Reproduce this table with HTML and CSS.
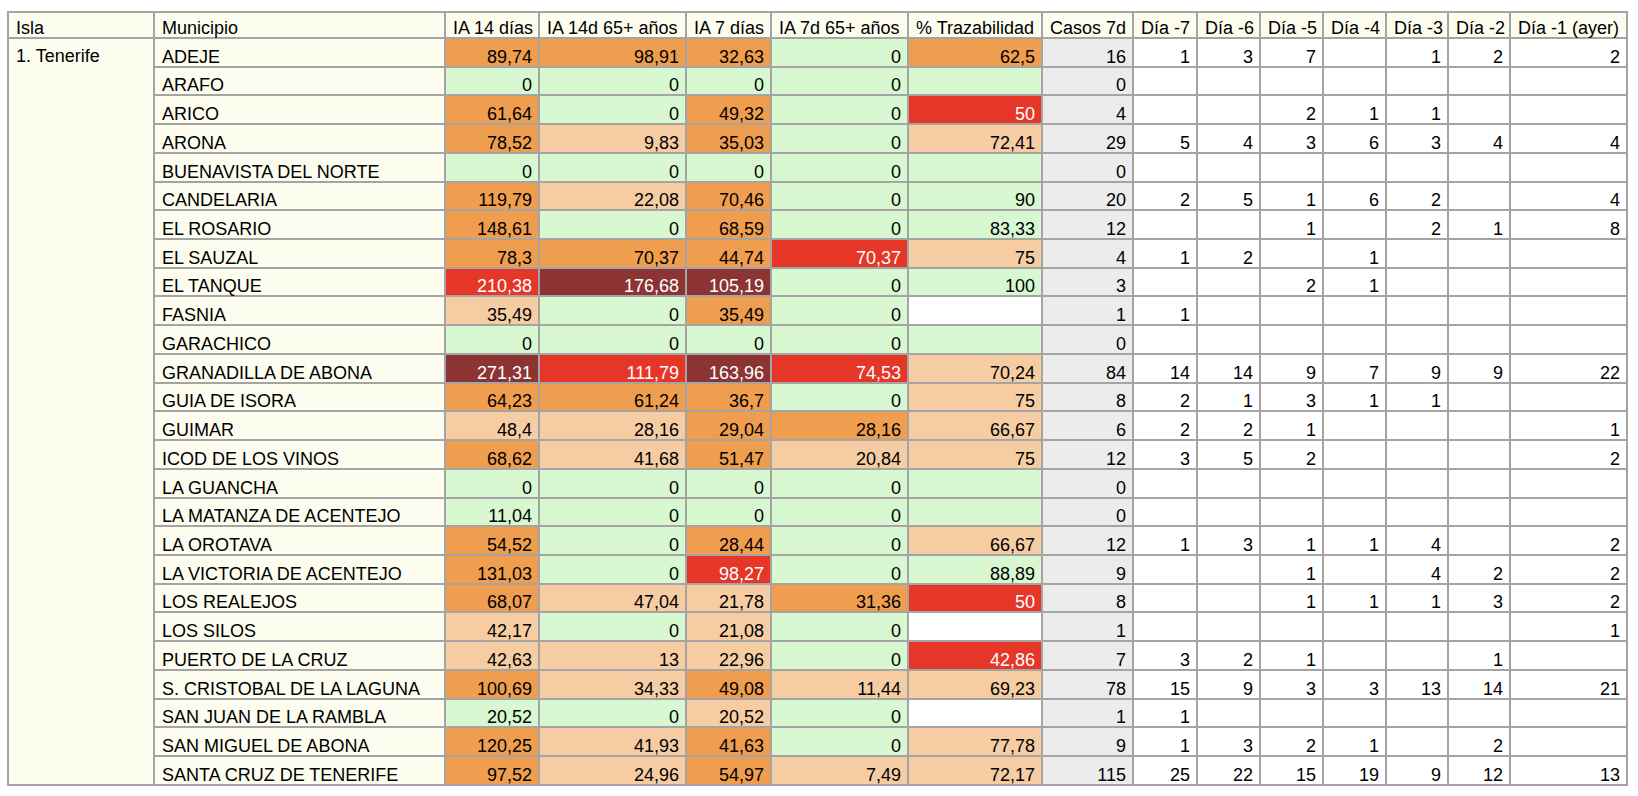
FILE: index.html
```html
<!DOCTYPE html>
<html lang="es">
<head>
<meta charset="utf-8">
<title>Incidencia COVID-19 Tenerife</title>
<link rel="stylesheet" href="styles.css">
</head>
<body>
<div class="wrap">
<table class="grid">
<colgroup>
<col class="w-isla"><col class="w-mun"><col class="w-ia14"><col class="w-ia14v"><col class="w-ia7"><col class="w-ia7v"><col class="w-traz"><col class="w-casos">
<col class="w-d7"><col class="w-d6"><col class="w-d5"><col class="w-d4"><col class="w-d3"><col class="w-d2"><col class="w-d1">
</colgroup>
<thead>
<tr class="head">
<th>Isla</th><th>Municipio</th><th>IA 14 días</th><th>IA 14d 65+ años</th><th>IA 7 días</th><th>IA 7d 65+ años</th><th>% Trazabilidad</th><th>Casos 7d</th><th>Día -7</th><th>Día -6</th><th>Día -5</th><th>Día -4</th><th>Día -3</th><th>Día -2</th><th>Día -1 (ayer)</th>
</tr>
</thead>
<tbody>
<tr><td class="isla" rowspan="26">1. Tenerife</td><td class="mun">ADEJE</td><td class="n o">89,74</td><td class="n o">98,91</td><td class="n o">32,63</td><td class="n g">0</td><td class="n o">62,5</td><td class="n c">16</td><td class="n">1</td><td class="n">3</td><td class="n">7</td><td class="n"></td><td class="n">1</td><td class="n">2</td><td class="n">2</td></tr>
<tr><td class="mun">ARAFO</td><td class="n g">0</td><td class="n g">0</td><td class="n g">0</td><td class="n g">0</td><td class="n g"></td><td class="n c">0</td><td class="n"></td><td class="n"></td><td class="n"></td><td class="n"></td><td class="n"></td><td class="n"></td><td class="n"></td></tr>
<tr><td class="mun">ARICO</td><td class="n o">61,64</td><td class="n g">0</td><td class="n o">49,32</td><td class="n g">0</td><td class="n r">50</td><td class="n c">4</td><td class="n"></td><td class="n"></td><td class="n">2</td><td class="n">1</td><td class="n">1</td><td class="n"></td><td class="n"></td></tr>
<tr><td class="mun">ARONA</td><td class="n o">78,52</td><td class="n p">9,83</td><td class="n o">35,03</td><td class="n g">0</td><td class="n p">72,41</td><td class="n c">29</td><td class="n">5</td><td class="n">4</td><td class="n">3</td><td class="n">6</td><td class="n">3</td><td class="n">4</td><td class="n">4</td></tr>
<tr><td class="mun">BUENAVISTA DEL NORTE</td><td class="n g">0</td><td class="n g">0</td><td class="n g">0</td><td class="n g">0</td><td class="n g"></td><td class="n c">0</td><td class="n"></td><td class="n"></td><td class="n"></td><td class="n"></td><td class="n"></td><td class="n"></td><td class="n"></td></tr>
<tr><td class="mun">CANDELARIA</td><td class="n o">119,79</td><td class="n p">22,08</td><td class="n o">70,46</td><td class="n g">0</td><td class="n g">90</td><td class="n c">20</td><td class="n">2</td><td class="n">5</td><td class="n">1</td><td class="n">6</td><td class="n">2</td><td class="n"></td><td class="n">4</td></tr>
<tr><td class="mun">EL ROSARIO</td><td class="n o">148,61</td><td class="n g">0</td><td class="n o">68,59</td><td class="n g">0</td><td class="n g">83,33</td><td class="n c">12</td><td class="n"></td><td class="n"></td><td class="n">1</td><td class="n"></td><td class="n">2</td><td class="n">1</td><td class="n">8</td></tr>
<tr><td class="mun">EL SAUZAL</td><td class="n o">78,3</td><td class="n o">70,37</td><td class="n o">44,74</td><td class="n r">70,37</td><td class="n p">75</td><td class="n c">4</td><td class="n">1</td><td class="n">2</td><td class="n"></td><td class="n">1</td><td class="n"></td><td class="n"></td><td class="n"></td></tr>
<tr><td class="mun">EL TANQUE</td><td class="n r">210,38</td><td class="n d">176,68</td><td class="n d">105,19</td><td class="n g">0</td><td class="n g">100</td><td class="n c">3</td><td class="n"></td><td class="n"></td><td class="n">2</td><td class="n">1</td><td class="n"></td><td class="n"></td><td class="n"></td></tr>
<tr><td class="mun">FASNIA</td><td class="n p">35,49</td><td class="n g">0</td><td class="n o">35,49</td><td class="n g">0</td><td class="n"></td><td class="n c">1</td><td class="n">1</td><td class="n"></td><td class="n"></td><td class="n"></td><td class="n"></td><td class="n"></td><td class="n"></td></tr>
<tr><td class="mun">GARACHICO</td><td class="n g">0</td><td class="n g">0</td><td class="n g">0</td><td class="n g">0</td><td class="n g"></td><td class="n c">0</td><td class="n"></td><td class="n"></td><td class="n"></td><td class="n"></td><td class="n"></td><td class="n"></td><td class="n"></td></tr>
<tr><td class="mun">GRANADILLA DE ABONA</td><td class="n d">271,31</td><td class="n r">111,79</td><td class="n d">163,96</td><td class="n r">74,53</td><td class="n p">70,24</td><td class="n c">84</td><td class="n">14</td><td class="n">14</td><td class="n">9</td><td class="n">7</td><td class="n">9</td><td class="n">9</td><td class="n">22</td></tr>
<tr><td class="mun">GUIA DE ISORA</td><td class="n o">64,23</td><td class="n o">61,24</td><td class="n o">36,7</td><td class="n g">0</td><td class="n p">75</td><td class="n c">8</td><td class="n">2</td><td class="n">1</td><td class="n">3</td><td class="n">1</td><td class="n">1</td><td class="n"></td><td class="n"></td></tr>
<tr><td class="mun">GUIMAR</td><td class="n p">48,4</td><td class="n p">28,16</td><td class="n o">29,04</td><td class="n o">28,16</td><td class="n p">66,67</td><td class="n c">6</td><td class="n">2</td><td class="n">2</td><td class="n">1</td><td class="n"></td><td class="n"></td><td class="n"></td><td class="n">1</td></tr>
<tr><td class="mun">ICOD DE LOS VINOS</td><td class="n o">68,62</td><td class="n p">41,68</td><td class="n o">51,47</td><td class="n p">20,84</td><td class="n p">75</td><td class="n c">12</td><td class="n">3</td><td class="n">5</td><td class="n">2</td><td class="n"></td><td class="n"></td><td class="n"></td><td class="n">2</td></tr>
<tr><td class="mun">LA GUANCHA</td><td class="n g">0</td><td class="n g">0</td><td class="n g">0</td><td class="n g">0</td><td class="n g"></td><td class="n c">0</td><td class="n"></td><td class="n"></td><td class="n"></td><td class="n"></td><td class="n"></td><td class="n"></td><td class="n"></td></tr>
<tr><td class="mun">LA MATANZA DE ACENTEJO</td><td class="n g">11,04</td><td class="n g">0</td><td class="n g">0</td><td class="n g">0</td><td class="n g"></td><td class="n c">0</td><td class="n"></td><td class="n"></td><td class="n"></td><td class="n"></td><td class="n"></td><td class="n"></td><td class="n"></td></tr>
<tr><td class="mun">LA OROTAVA</td><td class="n o">54,52</td><td class="n g">0</td><td class="n o">28,44</td><td class="n g">0</td><td class="n p">66,67</td><td class="n c">12</td><td class="n">1</td><td class="n">3</td><td class="n">1</td><td class="n">1</td><td class="n">4</td><td class="n"></td><td class="n">2</td></tr>
<tr><td class="mun">LA VICTORIA DE ACENTEJO</td><td class="n o">131,03</td><td class="n g">0</td><td class="n r">98,27</td><td class="n g">0</td><td class="n g">88,89</td><td class="n c">9</td><td class="n"></td><td class="n"></td><td class="n">1</td><td class="n"></td><td class="n">4</td><td class="n">2</td><td class="n">2</td></tr>
<tr><td class="mun">LOS REALEJOS</td><td class="n o">68,07</td><td class="n p">47,04</td><td class="n p">21,78</td><td class="n o">31,36</td><td class="n r">50</td><td class="n c">8</td><td class="n"></td><td class="n"></td><td class="n">1</td><td class="n">1</td><td class="n">1</td><td class="n">3</td><td class="n">2</td></tr>
<tr><td class="mun">LOS SILOS</td><td class="n p">42,17</td><td class="n g">0</td><td class="n p">21,08</td><td class="n g">0</td><td class="n"></td><td class="n c">1</td><td class="n"></td><td class="n"></td><td class="n"></td><td class="n"></td><td class="n"></td><td class="n"></td><td class="n">1</td></tr>
<tr><td class="mun">PUERTO DE LA CRUZ</td><td class="n p">42,63</td><td class="n p">13</td><td class="n p">22,96</td><td class="n g">0</td><td class="n r">42,86</td><td class="n c">7</td><td class="n">3</td><td class="n">2</td><td class="n">1</td><td class="n"></td><td class="n"></td><td class="n">1</td><td class="n"></td></tr>
<tr><td class="mun">S. CRISTOBAL DE LA LAGUNA</td><td class="n o">100,69</td><td class="n p">34,33</td><td class="n o">49,08</td><td class="n p">11,44</td><td class="n p">69,23</td><td class="n c">78</td><td class="n">15</td><td class="n">9</td><td class="n">3</td><td class="n">3</td><td class="n">13</td><td class="n">14</td><td class="n">21</td></tr>
<tr><td class="mun">SAN JUAN DE LA RAMBLA</td><td class="n g">20,52</td><td class="n g">0</td><td class="n p">20,52</td><td class="n g">0</td><td class="n"></td><td class="n c">1</td><td class="n">1</td><td class="n"></td><td class="n"></td><td class="n"></td><td class="n"></td><td class="n"></td><td class="n"></td></tr>
<tr><td class="mun">SAN MIGUEL DE ABONA</td><td class="n o">120,25</td><td class="n p">41,93</td><td class="n o">41,63</td><td class="n g">0</td><td class="n p">77,78</td><td class="n c">9</td><td class="n">1</td><td class="n">3</td><td class="n">2</td><td class="n">1</td><td class="n"></td><td class="n">2</td><td class="n"></td></tr>
<tr><td class="mun">SANTA CRUZ DE TENERIFE</td><td class="n o">97,52</td><td class="n p">24,96</td><td class="n o">54,97</td><td class="n p">7,49</td><td class="n p">72,17</td><td class="n c">115</td><td class="n">25</td><td class="n">22</td><td class="n">15</td><td class="n">19</td><td class="n">9</td><td class="n">12</td><td class="n">13</td></tr>
</tbody>
</table>
</div>
</body>
</html>
```
FILE: styles.css
```css
html, body {
  margin: 0;
  padding: 0;
  background: #ffffff;
}

.wrap {
  padding: 11px 0 0 7px;
}

.grid {
  border-collapse: collapse;
  table-layout: fixed;
  width: 1619px;
  font-family: "Liberation Sans", Arial, sans-serif;
  font-size: 18px;
  line-height: 16px;
  color: #000;
}

.w-isla { width: 146px; }
.w-mun { width: 291px; }
.w-ia14 { width: 94px; }
.w-ia14v { width: 147px; }
.w-ia7 { width: 85px; }
.w-ia7v { width: 137px; }
.w-traz { width: 134px; }
.w-casos { width: 91px; }
.w-d7 { width: 64px; }
.w-d6 { width: 63px; }
.w-d5 { width: 63px; }
.w-d4 { width: 63px; }
.w-d3 { width: 62px; }
.w-d2 { width: 62px; }
.w-d1 { width: 117px; }

.grid th,
.grid td {
  border: 2px solid #a4a4a4;
  padding: 0 6px 1px 7px;
  vertical-align: bottom;
  white-space: nowrap;
  background: #ffffff;
}

.grid th {
  font-weight: normal;
  text-align: left;
  background: #fdfdef;
}

.grid tr.head {
  height: 26px;
}

.grid tbody tr {
  height: 28.73px;
}

.grid td.isla {
  vertical-align: top;
  padding-top: 9px;
  background: #fdfdef;
}

.grid td.mun {
  background: #fdfdef;
}

.grid td.n {
  text-align: right;
}

.grid td.o { background: #ef9e4f; }
.grid td.p { background: #f6cda3; }
.grid td.g { background: #d7f8d1; }
.grid td.r { background: #e53628; color: #ffffff; }
.grid td.d { background: #8c3433; color: #ffffff; }
.grid td.c { background: #ececec; }
```
